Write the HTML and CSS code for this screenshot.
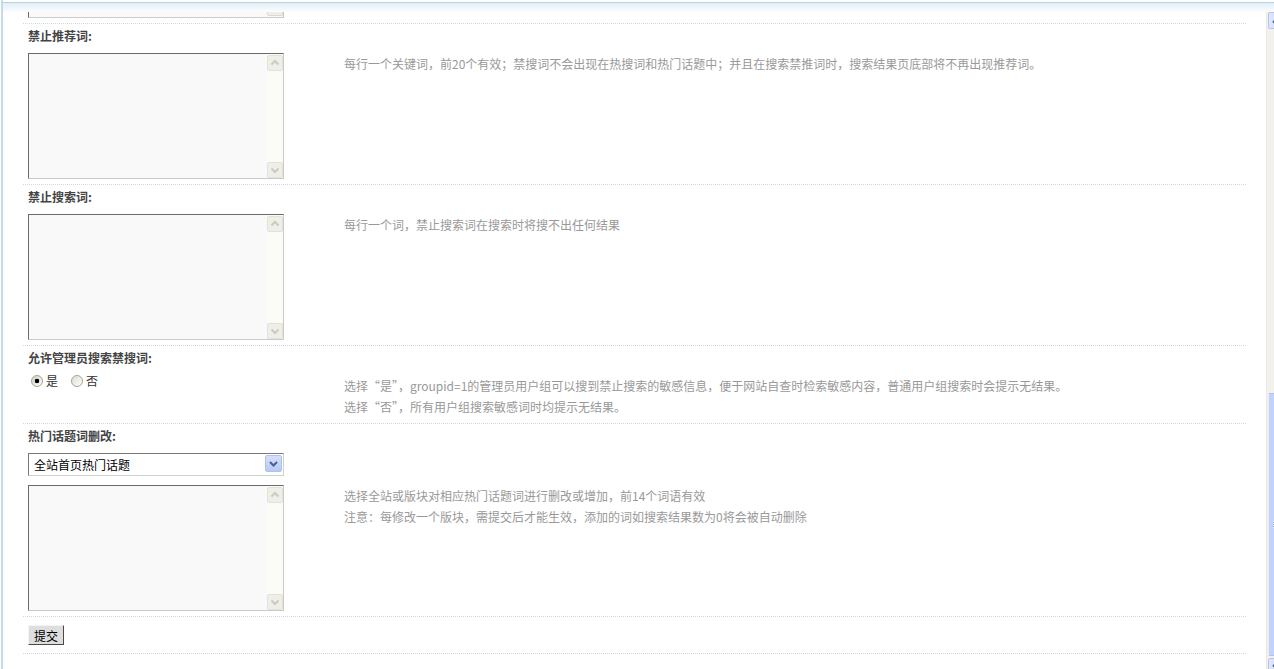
FILE: index.html
```html
<!DOCTYPE html>
<html lang="zh-CN">
<head>
  <meta charset="UTF-8">
  <title>搜索设置</title>
  <link rel="stylesheet" href="styles.css">
</head>
<body>
<div class="frame">
  <div class="frame-top"></div>
  <div class="frame-body">
    <div class="content">

      <!-- 上一项：只露出文本框底边 -->
      <div class="item">
        <div class="area-stub"><span class="area-stub-btn"></span></div>
      </div>

      <!-- 禁止推荐词 -->
      <div class="item">
        <div class="item-title">禁止推荐词:</div>
        <div class="item-row">
          <div class="item-field">
            <div class="area">
              <textarea class="area-text"></textarea>
              <div class="area-scroll">
                <span class="area-btn"><svg width="14" height="14" viewBox="0 0 14 14"><polyline points="3.5,8.5 7,5 10.5,8.5" fill="none" stroke="#cbcbc3" stroke-width="2"/></svg></span>
                <span class="area-btn"><svg width="14" height="14" viewBox="0 0 14 14"><polyline points="3.5,5.5 7,9 10.5,5.5" fill="none" stroke="#cbcbc3" stroke-width="2"/></svg></span>
              </div>
            </div>
          </div>
          <div class="item-tip">每行一个关键词，前20个有效；禁搜词不会出现在热搜词和热门话题中；并且在搜索禁推词时，搜索结果页底部将不再出现推荐词。</div>
        </div>
      </div>

      <!-- 禁止搜索词 -->
      <div class="item">
        <div class="item-title">禁止搜索词:</div>
        <div class="item-row">
          <div class="item-field">
            <div class="area">
              <textarea class="area-text"></textarea>
              <div class="area-scroll">
                <span class="area-btn"><svg width="14" height="14" viewBox="0 0 14 14"><polyline points="3.5,8.5 7,5 10.5,8.5" fill="none" stroke="#cbcbc3" stroke-width="2"/></svg></span>
                <span class="area-btn"><svg width="14" height="14" viewBox="0 0 14 14"><polyline points="3.5,5.5 7,9 10.5,5.5" fill="none" stroke="#cbcbc3" stroke-width="2"/></svg></span>
              </div>
            </div>
          </div>
          <div class="item-tip">每行一个词，禁止搜索词在搜索时将搜不出任何结果</div>
        </div>
      </div>

      <!-- 管理员搜索禁搜词 -->
      <div class="item item-radio">
        <div class="item-title">允许管理员搜索禁搜词:</div>
        <div class="item-row">
          <div class="item-field">
            <div class="radios">
              <label class="radio-label"><input type="radio" name="admin_search" class="radio" checked>是</label>
              <label class="radio-label"><input type="radio" name="admin_search" class="radio">否</label>
            </div>
          </div>
          <div class="item-tip">
            <div>选择“是”，groupid=1的管理员用户组可以搜到禁止搜索的敏感信息，便于网站自查时检索敏感内容，普通用户组搜索时会提示无结果。</div>
            <div>选择“否”，所有用户组搜索敏感词时均提示无结果。</div>
          </div>
        </div>
      </div>

      <!-- 热门话题词删改 -->
      <div class="item">
        <div class="item-title">热门话题词删改:</div>
        <div class="item-row">
          <div class="item-field">
            <div class="select-wrap">
              <select class="select">
                <option>全站首页热门话题</option>
              </select>
              <span class="select-arrow"><svg width="15" height="15" viewBox="0 0 15 15"><polyline points="4,6 7.5,9.5 11,6" fill="none" stroke="#4d6185" stroke-width="2"/></svg></span>
            </div>
          </div>
        </div>
        <div class="item-row">
          <div class="item-field">
            <div class="area">
              <textarea class="area-text"></textarea>
              <div class="area-scroll">
                <span class="area-btn"><svg width="14" height="14" viewBox="0 0 14 14"><polyline points="3.5,8.5 7,5 10.5,8.5" fill="none" stroke="#cbcbc3" stroke-width="2"/></svg></span>
                <span class="area-btn"><svg width="14" height="14" viewBox="0 0 14 14"><polyline points="3.5,5.5 7,9 10.5,5.5" fill="none" stroke="#cbcbc3" stroke-width="2"/></svg></span>
              </div>
            </div>
          </div>
          <div class="item-tip">
            <div>选择全站或版块对相应热门话题词进行删改或增加，前14个词语有效</div>
            <div>注意：每修改一个版块，需提交后才能生效，添加的词如搜索结果数为0将会被自动删除</div>
          </div>
        </div>
      </div>

      <div class="item item-submit">
        <button class="btn">提交</button>
      </div>

    </div>

    <!-- 右侧滚动条 -->
    <div class="vscroll">
      <div class="vscroll-btn"><svg width="15" height="15" viewBox="0 0 15 15"><polyline points="4,9.5 7.5,6 11,9.5" fill="none" stroke="#4d6185" stroke-width="2"/></svg></div>
      <div class="vscroll-thumb">
        <span class="grip"></span>
      </div>
      <div class="vscroll-btn"><svg width="15" height="15" viewBox="0 0 15 15"><polyline points="4,6 7.5,9.5 11,6" fill="none" stroke="#4d6185" stroke-width="2"/></svg></div>
    </div>
  </div>
</div>
</body>
</html>
```

FILE: styles.css
```css
html, body {
  margin: 0;
  height: 100%;
  overflow: hidden;
  background: #fff;
}

body {
  font: 12px "Noto Sans CJK SC", "Liberation Sans", sans-serif;
  color: #333;
}

/* === 外框 === */
.frame {
  height: 669px;
  margin-left: 1px;
  border-left: 2px solid #c4dce9;
  display: flex;
  flex-direction: column;
}

.frame-top {
  flex: none;
  margin-top: 2px;
  height: 9px;
  border-top: 1px solid #b7d1e0;
  background: linear-gradient(#e2eef6, #fbfdfe);
}

.frame-body {
  flex: 1;
  min-height: 0;
  display: flex;
}

.content {
  flex: 1;
  padding: 0 20px;
  overflow: hidden;
}

/* === 设置项 === */
.item {
  padding: 0 5px 5px;
  border-bottom: 1px dotted #ccdae4;
}

.item-radio {
  padding-bottom: 6px;
}

.item-title {
  font-weight: bold;
  color: #444;
  line-height: 18px;
  padding: 3px 0 8px;
}

.item-row {
  display: flex;
  align-items: flex-start;
}

.item-field {
  width: 316px;
  flex: none;
}

.item-tip {
  color: #999;
  line-height: 21px;
}

/* === 文本框 === */
.area {
  display: flex;
  width: 256px;
  height: 126px;
  box-sizing: border-box;
  border: 1px solid;
  border-color: #6b6b6b #cacaca #cacaca #6b6b6b;
  background: #f9f9f9;
}

.area-text {
  flex: 1;
  border: 0;
  margin: 0;
  padding: 2px;
  resize: none;
  background: transparent;
  outline: none;
}

.area-scroll {
  width: 16px;
  flex: none;
  display: flex;
  flex-direction: column;
  justify-content: space-between;
  padding-top: 1px;
  background: #fcfcf6;
}

.area-btn {
  width: 16px;
  height: 16px;
  box-sizing: border-box;
  border: 1px solid #e3e2d9;
  border-radius: 2px;
  background: #efeee7;
  display: flex;
  align-items: center;
  justify-content: center;
}

.area-stub {
  width: 254px;
  height: 5px;
  border: 1px solid;
  border-top: 0;
  border-color: #6b6b6b #cacaca #cacaca #6b6b6b;
  background: #f9f9f9;
  display: flex;
  justify-content: flex-end;
}

.area-stub-btn {
  width: 16px;
  height: 4px;
  box-sizing: border-box;
  border: 1px solid #dcdbd2;
  border-top: 0;
  border-radius: 0 0 2px 2px;
  background: #efeee7;
}

/* === 单选 === */
.radios {
  height: 12px;
  display: flex;
  align-items: center;
}

.radio-label {
  display: flex;
  align-items: center;
  margin-right: 10px;
  color: #333;
  line-height: 12px;
}

.radio {
  -webkit-appearance: none;
  appearance: none;
  width: 12px;
  height: 12px;
  margin: 0 3px;
  border-radius: 50%;
  border: 1px solid #a3a394;
  background: linear-gradient(135deg, #dcdcd2, #fff);
}

.radio:checked {
  background: radial-gradient(circle, #000 0 2px, transparent 2.6px),
              linear-gradient(135deg, #cfcfc5, #fff);
}

/* === 下拉框 === */
.select-wrap {
  position: relative;
  width: 256px;
  margin-bottom: 9px;
}

.select {
  -webkit-appearance: none;
  appearance: none;
  display: block;
  width: 256px;
  height: 23px;
  box-sizing: border-box;
  margin: 0;
  padding: 0 5px;
  border: 1px solid;
  border-color: #7a7a7a #d0d0d0 #d0d0d0 #7a7a7a;
  background: #fff;
  font: 12px "Noto Sans CJK SC", "Liberation Sans", sans-serif;
  color: #000;
}

.select-arrow {
  position: absolute;
  top: 2px;
  right: 2px;
  width: 17px;
  height: 17px;
  box-sizing: border-box;
  border: 1px solid #b0c1ee;
  border-radius: 2px;
  background: linear-gradient(#d4dffb, #b6c9f6);
  display: flex;
  align-items: center;
  justify-content: center;
}

/* === 提交按钮 === */
.item-submit {
  padding: 8px 5px;
}

.btn {
  display: block;
  width: 36px;
  height: 20px;
  margin: 0;
  padding: 0;
  border: 1px solid;
  border-color: #f4f4f4 #4a4a4a #4a4a4a #f4f4f4;
  background: #dedede;
  font: 12px "Noto Sans CJK SC", "Liberation Sans", sans-serif;
  color: #000;
}

/* === 右侧滚动条（只露出一截） === */
.vscroll {
  width: 8px;
  flex: none;
  overflow: hidden;
  box-sizing: border-box;
  padding-left: 1px;
  border-left: 1px solid #ebe9e1;
  background: #f3f1eb;
}

.vscroll-btn {
  width: 17px;
  height: 17px;
  box-sizing: border-box;
  border: 1px solid #b2c4f0;
  border-radius: 2px;
  background: linear-gradient(90deg, #e0e8fd, #c3d4fc);
  display: flex;
  align-items: center;
  justify-content: center;
}

.vscroll-thumb {
  width: 17px;
  height: 263px;
  margin: 364px 0 2px;
  box-sizing: border-box;
  border: 1px solid #aec1ef;
  border-left-color: #e6edfd;
  border-radius: 2px;
  background: #c2d3fb;
  display: flex;
  align-items: center;
  justify-content: center;
}

.grip {
  width: 8px;
  height: 7px;
  background: repeating-linear-gradient(#eef3fe 0 1px, #8fa8e8 1px 2px);
}
```
